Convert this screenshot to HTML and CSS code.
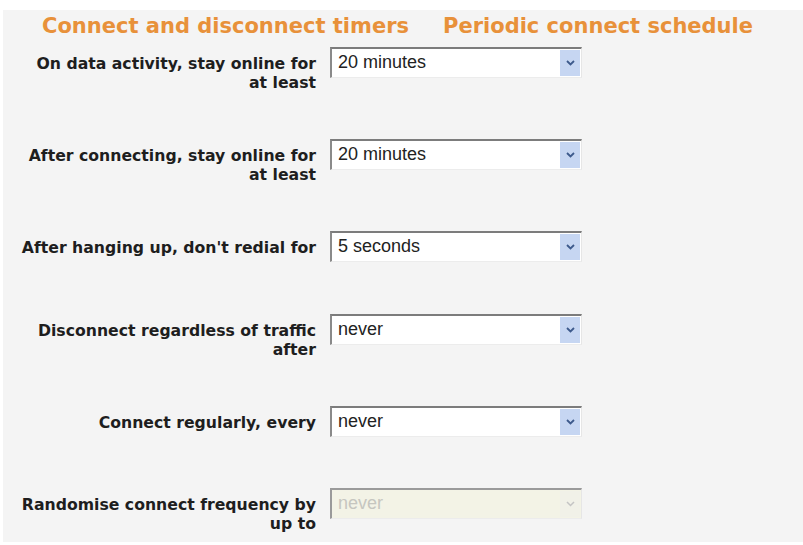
FILE: index.html
```html
<!DOCTYPE html>
<html lang="en">

<head>
    <meta charset="UTF-8">
    <title>Connect and disconnect timers</title>
    <link rel="stylesheet" href="styles.css">
</head>

<body>
    <div class="panel">
        <div class="tabs">
            <span class="tab">Connect and disconnect timers</span>
            <span class="tab">Periodic connect schedule</span>
        </div>

        <div class="form">
            <div class="row tall">
                <label class="lbl">On data activity, stay online for<br>at least</label>
                <div class="sel"><span class="val">20 minutes</span><span class="btn"><svg width="9" height="6" viewBox="0 0 9 6"><path d="M1 1l3.5 3.5L8 1" fill="none" stroke="#3d5a8c" stroke-width="1.8"/></svg></span></div>
            </div>
            <div class="row tall">
                <label class="lbl">After connecting, stay online for<br>at least</label>
                <div class="sel"><span class="val">20 minutes</span><span class="btn"><svg width="9" height="6" viewBox="0 0 9 6"><path d="M1 1l3.5 3.5L8 1" fill="none" stroke="#3d5a8c" stroke-width="1.8"/></svg></span></div>
            </div>
            <div class="row">
                <label class="lbl">After hanging up, don't redial for</label>
                <div class="sel"><span class="val">5 seconds</span><span class="btn"><svg width="9" height="6" viewBox="0 0 9 6"><path d="M1 1l3.5 3.5L8 1" fill="none" stroke="#3d5a8c" stroke-width="1.8"/></svg></span></div>
            </div>
            <div class="row tall">
                <label class="lbl">Disconnect regardless of traffic<br>after</label>
                <div class="sel"><span class="val">never</span><span class="btn"><svg width="9" height="6" viewBox="0 0 9 6"><path d="M1 1l3.5 3.5L8 1" fill="none" stroke="#3d5a8c" stroke-width="1.8"/></svg></span></div>
            </div>
            <div class="row short">
                <label class="lbl">Connect regularly, every</label>
                <div class="sel"><span class="val">never</span><span class="btn"><svg width="9" height="6" viewBox="0 0 9 6"><path d="M1 1l3.5 3.5L8 1" fill="none" stroke="#3d5a8c" stroke-width="1.8"/></svg></span></div>
            </div>
            <div class="row">
                <label class="lbl">Randomise connect frequency by<br>up to</label>
                <div class="sel disabled"><span class="val">never</span><span class="btn"><svg width="9" height="6" viewBox="0 0 9 6"><path d="M1 1l3.5 3.5L8 1" fill="none" stroke="#c4c4c4" stroke-width="1.5"/></svg></span></div>
            </div>
        </div>
    </div>
</body>

</html>
```

FILE: styles.css
```css
* {
    margin: 0;
    padding: 0;
    box-sizing: border-box;
}

body {
    background-color: #fff;
    font-family: "DejaVu Sans", sans-serif;
}

.panel {
    margin: 10px 0 0 3px;
    height: 532px;
    padding-top: 4px;
    background-color: #f4f4f4;
    overflow: hidden;
}

.tabs {
    display: flex;
    gap: 34px;
    padding-left: 39px;
    height: 33px;
}

.tab {
    font-size: 21px;
    line-height: 25px;
    font-weight: bold;
    color: #e8913a;
}

.row {
    display: flex;
    align-items: flex-start;
    gap: 14px;
    height: 83px;
}

.row.tall {
    height: 92px;
}

.row.short {
    height: 82px;
}

.lbl {
    width: 313px;
    padding-top: 7px;
    text-align: right;
    font-size: 15.7px;
    line-height: 19px;
    font-weight: bold;
    color: #1e1e1e;
}

.sel {
    display: flex;
    align-items: flex-start;
    width: 252px;
    height: 31px;
    border-top: 2px solid #7c7c7c;
    border-left: 2px solid #8a8a8a;
    border-right: 1px solid #e6e6e6;
    border-bottom: 1px solid #ececec;
    background-color: #fff;
}

.sel .val {
    flex: 1;
    padding: 3px 0 0 6px;
    font-family: "Liberation Sans", Arial, sans-serif;
    font-size: 18px;
    line-height: 20px;
    color: #222;
}

.sel .btn {
    display: flex;
    align-items: center;
    justify-content: center;
    width: 20px;
    height: 26px;
    margin: 1px 1px 0 0;
    background-color: #c6d6f2;
}

.sel.disabled {
    background-color: #f3f3e6;
    border-top-color: #9a9a9a;
    border-left-color: #9a9a9a;
}

.sel.disabled .val {
    color: #c6c6c0;
}

.sel.disabled .btn {
    background-color: #f1f1e8;
}
```
